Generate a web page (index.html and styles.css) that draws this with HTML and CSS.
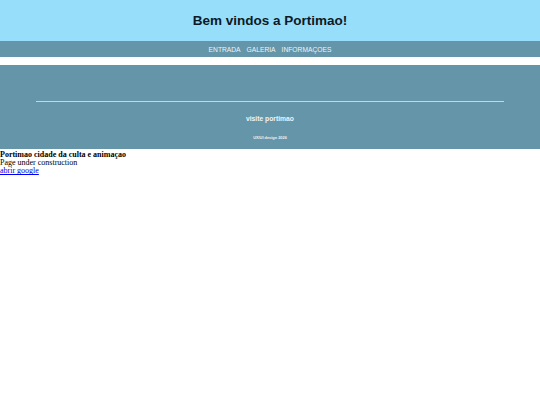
FILE: index.html
```html
<!DOCTYPE html>
<html lang="pt">
<head>
<meta charset="utf-8">
<title>Portimao</title>
<link rel="stylesheet" href="styles.css">
</head>
<body>
<header class="top">
  <h1 class="title">Bem vindos a Portimao!</h1>
</header>
<nav class="menu">
  <a href="#">ENTRADA</a>
  <a href="#">GALERIA</a>
  <a href="#">INFORMAÇOES</a>
</nav>
<footer class="foot">
  <hr class="rule">
  <p class="visit">visite portimao</p>
  <p class="credit">UX/UI design 2026</p>
</footer>
<main class="content">
  <p class="lead">Portimao cidade da culta e animaçao</p>
  <p class="plain">Page under construction</p>
  <a class="link" href="#">abrir google</a>
</main>
</body>
</html>
```
FILE: styles.css
```css
html, body {
  margin: 0;
  padding: 0;
  background: #ffffff;
}
body {
  font-family: "Liberation Serif", "Times New Roman", serif;
}
.top {
  background: #97defb;
  height: 41px;
  display: flex;
  align-items: center;
  justify-content: center;
}
.title {
  margin: 0;
  font-family: "Liberation Sans", Arial, sans-serif;
  font-size: 13.5px;
  font-weight: bold;
  color: #0d1a24;
}
.menu {
  background: #6595a8;
  height: 16px;
  display: flex;
  justify-content: center;
  align-items: center;
  gap: 6px;
  margin-bottom: 8px;
}
.menu a {
  font-family: "Liberation Sans", Arial, sans-serif;
  font-size: 6.7px;
  color: #eef3f6;
  text-decoration: none;
}
.foot {
  background: #6595a8;
  height: 84px;
  display: flex;
  flex-direction: column;
  align-items: center;
  padding-top: 36px;
  box-sizing: border-box;
}
.rule {
  width: 468px;
  margin: 0;
  border: 0;
  height: 1px;
  background: #c4d6de;
}
.visit {
  margin: 13px 0 0;
  font-family: "Liberation Sans", Arial, sans-serif;
  font-size: 6.75px;
  font-weight: bold;
  color: #eef3f6;
}
.credit {
  margin: 13px 0 0;
  font-family: "Liberation Sans", Arial, sans-serif;
  font-size: 3.9px;
  font-weight: bold;
  color: #eef3f6;
}
.content {
  font-size: 8px;
  line-height: 8.2px;
  padding-top: 2px;
}
.lead {
  margin: 0;
  font-weight: bold;
  color: #000;
}
.plain {
  margin: 0;
  color: #000;
}
.link {
  color: #0000ee;
}
```
